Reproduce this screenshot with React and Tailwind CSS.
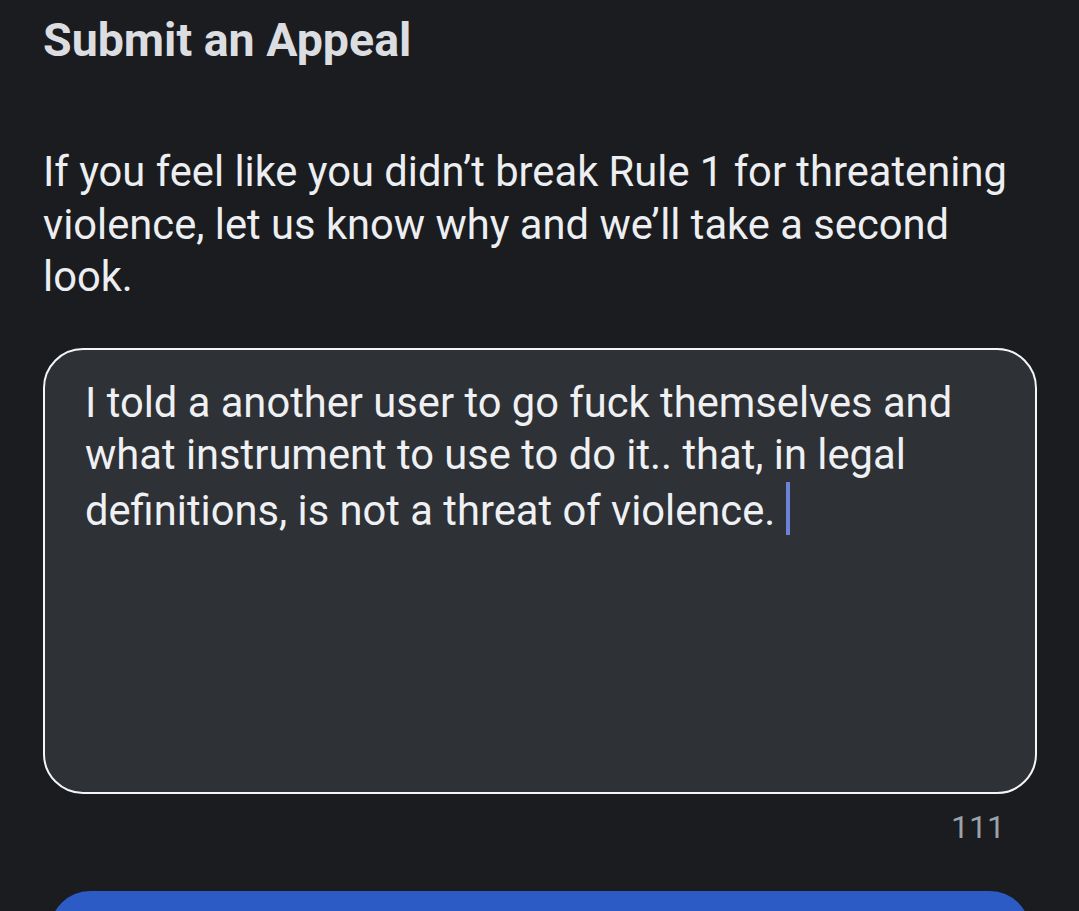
import React, { useState } from "react";

const AppealPage = () => {
  const [text] = useState(
    "I told a another user to go fuck themselves and what instrument to use to do it.. that, in legal definitions, is not a threat of violence. "
  );

  return (
    <div
      className="min-h-[911px] h-[911px] overflow-hidden bg-[#1a1c1f] px-[43px] pr-[42px]"
      style={{ fontFamily: "Roboto, 'Noto Sans', sans-serif" }}
    >
      <h1 className="pt-[10px] text-[46.5px] leading-[60px] font-bold text-[#dcdde0]">
        Submit an Appeal
      </h1>

      <p className="mt-[76px] text-[41.7px] leading-[52.5px] text-[#eceef1]">
        If you feel like you didn’t break Rule 1 for threatening violence, let us know why and we’ll take a second look.
      </p>

      <div className="mt-[44px] h-[446px] rounded-[40px] border-[2.5px] border-[#f4f5f7] bg-[#2e3135] pl-[40px] pr-[40px] pt-[27px]">
        <p className="text-[41.7px] leading-[52.5px] text-[#eef0f4]">
          {text}
          <span className="inline-block h-[53px] w-[4px] bg-[#6b82d6] align-[-10px]" />
        </p>
      </div>

      <div className="mt-[13px] flex justify-end pr-[32px] text-[32px] leading-[40px] text-[#9aa2aa]">
        111
      </div>

      <div className="mx-[7px] mt-[44px] h-[80px] rounded-[48px] bg-[#2c5bc5]" />
    </div>
  );
};

export default AppealPage;
